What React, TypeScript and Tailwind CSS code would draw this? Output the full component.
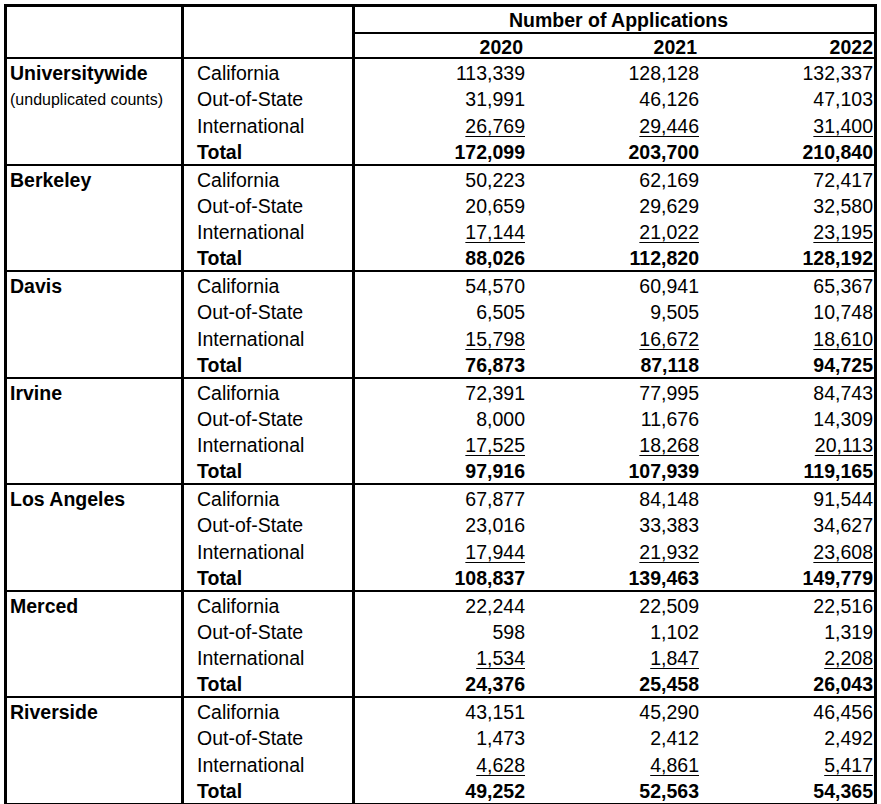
import React from "react";

type Campus = {
  name: string;
  note?: string;
  rows: [string, string, string][]; // California, Out-of-State, International, Total
};

const campuses: Campus[] = [
  {
    name: "Universitywide",
    note: "(unduplicated counts)",
    rows: [
      ["113,339", "128,128", "132,337"],
      ["31,991", "46,126", "47,103"],
      ["26,769", "29,446", "31,400"],
      ["172,099", "203,700", "210,840"],
    ],
  },
  {
    name: "Berkeley",
    rows: [
      ["50,223", "62,169", "72,417"],
      ["20,659", "29,629", "32,580"],
      ["17,144", "21,022", "23,195"],
      ["88,026", "112,820", "128,192"],
    ],
  },
  {
    name: "Davis",
    rows: [
      ["54,570", "60,941", "65,367"],
      ["6,505", "9,505", "10,748"],
      ["15,798", "16,672", "18,610"],
      ["76,873", "87,118", "94,725"],
    ],
  },
  {
    name: "Irvine",
    rows: [
      ["72,391", "77,995", "84,743"],
      ["8,000", "11,676", "14,309"],
      ["17,525", "18,268", "20,113"],
      ["97,916", "107,939", "119,165"],
    ],
  },
  {
    name: "Los Angeles",
    rows: [
      ["67,877", "84,148", "91,544"],
      ["23,016", "33,383", "34,627"],
      ["17,944", "21,932", "23,608"],
      ["108,837", "139,463", "149,779"],
    ],
  },
  {
    name: "Merced",
    rows: [
      ["22,244", "22,509", "22,516"],
      ["598", "1,102", "1,319"],
      ["1,534", "1,847", "2,208"],
      ["24,376", "25,458", "26,043"],
    ],
  },
  {
    name: "Riverside",
    rows: [
      ["43,151", "45,290", "46,456"],
      ["1,473", "2,412", "2,492"],
      ["4,628", "4,861", "5,417"],
      ["49,252", "52,563", "54,365"],
    ],
  },
];

const labels = ["California", "Out-of-State", "International", "Total"];
const cols = "grid grid-cols-[177px_171px_171px_174px_174px]";
const rowH = "h-[26.125px] flex items-center pt-[4px]";

function Group({ campus }: { campus: Campus }) {
  return (
    <div className={`${cols} border-b-2 border-black`}>
      <div className="row-span-4 border-r-[3px] border-black pl-[3px]">
        <div className={`${rowH} font-bold`}>{campus.name}</div>
        {campus.note && <div className={`${rowH} text-[16px]`}>{campus.note}</div>}
      </div>
      {campus.rows.map((vals, i) => (
        <React.Fragment key={i}>
          <div
            className={`${rowH} border-r-[3px] border-black pl-[13px] ${i === 3 ? "font-bold" : ""}`}
          >
            {labels[i]}
          </div>
          {vals.map((v, j) => (
            <div key={j} className={`${rowH} justify-end pr-[1px] ${i === 3 ? "font-bold" : ""}`}>
              <span className={i === 2 ? "underline decoration-1 underline-offset-[3px]" : ""}>
                {v}
              </span>
            </div>
          ))}
        </React.Fragment>
      ))}
    </div>
  );
}

export default function App() {
  return (
    <div className="bg-white min-h-[804px] pl-[4px] pt-[4px] text-black text-[19.5px] leading-none font-['Liberation_Sans',Arial,sans-serif]">
      <div className="w-[873px] h-[800px] overflow-hidden border-[3px] border-b-0 border-black">
        <div className={`${cols} grid-rows-[27px_23px] border-b-2 border-black font-bold`}>
          <div className="row-span-2 border-r-[3px] border-black" />
          <div className="row-span-2 border-r-[3px] border-black" />
          <div className="col-span-3 flex items-center justify-center border-b-2 border-black pl-[8px] pt-[2px]">
            Number of Applications
          </div>
          <div className="flex items-center justify-end pr-[3px] pt-[4px]">2020</div>
          <div className="flex items-center justify-end pr-[3px] pt-[4px]">2021</div>
          <div className="flex items-center justify-end pr-[1px] pt-[4px]">2022</div>
        </div>
        {campuses.map((c) => (
          <Group key={c.name} campus={c} />
        ))}
      </div>
    </div>
  );
}
